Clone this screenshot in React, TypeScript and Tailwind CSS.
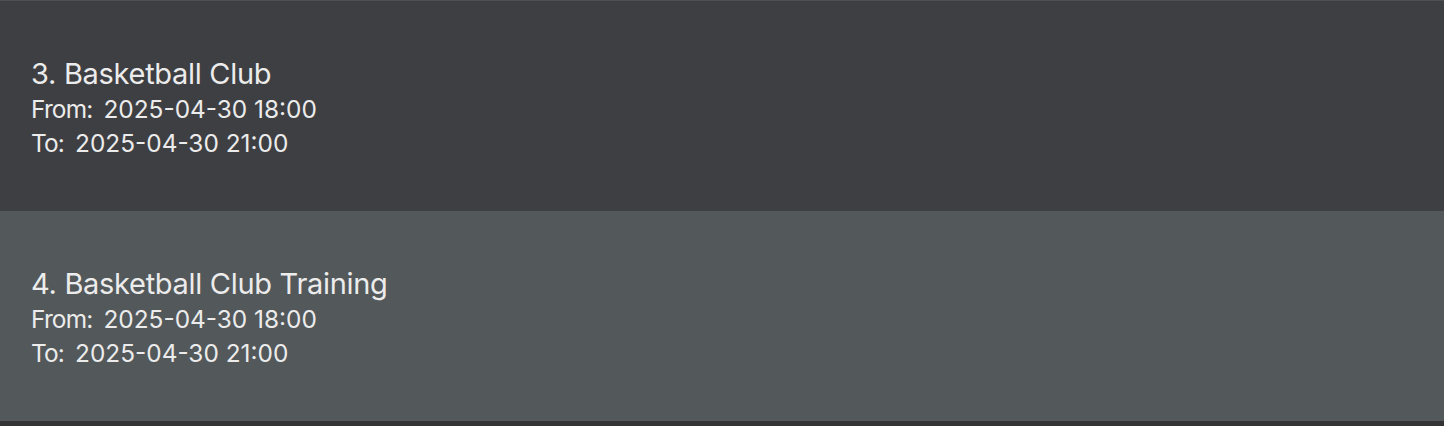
import React from "react";

const items = [
  { n: 3, title: "Basketball Club", from: "2025-04-30 18:00", to: "2025-04-30 21:00", bg: "bg-[#3e3f42]" },
  { n: 4, title: "Basketball Club Training", from: "2025-04-30 18:00", to: "2025-04-30 21:00", bg: "bg-[#53585b]" },
];

export default function App() {
  return (
    <div
      className="w-[1444px] h-[426px] bg-[#333335] flex flex-col text-[#ececec]"
      style={{ fontFamily: "Inter, 'Noto Sans', sans-serif" }}
    >
      <div className="h-px bg-[#4c5053]" />
      {items.map((it) => (
        <div key={it.n} className={`h-[210px] ${it.bg} flex flex-col justify-center px-[31px] pt-[3px]`}>
          <div className="text-[29px] leading-[35px] tracking-[-0.3px]">
            {it.n}. {it.title}
          </div>
          <div className="mt-[1px] flex gap-[11px] text-[24.4px] leading-[34px]">
            <span className="tracking-[-0.8px]">From:</span>
            <span>{it.from}</span>
          </div>
          <div className="flex gap-[11px] text-[24.4px] leading-[34px]">
            <span className="tracking-[-0.8px]">To:</span>
            <span>{it.to}</span>
          </div>
        </div>
      ))}
    </div>
  );
}
